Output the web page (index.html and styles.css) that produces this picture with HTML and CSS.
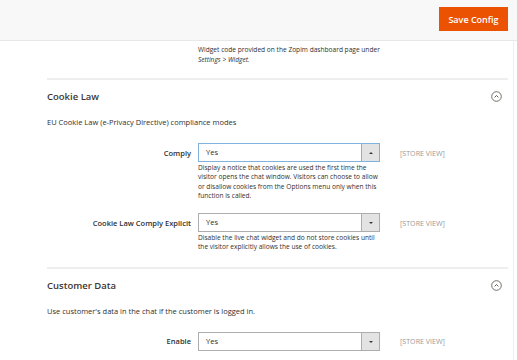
FILE: index.html
```html
<!DOCTYPE html>
<html lang="en">
<head>
    <meta charset="UTF-8">
    <title>Zopim Chat Configuration</title>
    <link rel="stylesheet" href="styles.css">
</head>
<body>
    <header class="page-actions">
        <button class="btn-save">Save Config</button>
    </header>
    <div class="content">
        <div class="widget-note">
            Widget code provided on the Zopim dashboard page under<br>
            <em>Settings &gt; Widget.</em>
        </div>

        <section class="section">
            <div class="section-head">
                <h2>Cookie Law</h2>
                <span class="toggle">
                    <svg width="11" height="11" viewBox="0 0 11 11"><circle cx="5.5" cy="5.5" r="4.8" fill="none" stroke="#676056" stroke-width="0.9"/><path d="M3.6 6.4 L5.5 4.5 L7.4 6.4" fill="none" stroke="#514943" stroke-width="0.9"/></svg>
                </span>
            </div>
            <p class="section-desc">EU Cookie Law (e-Privacy Directive) compliance modes</p>

            <div class="field">
                <label>Comply</label>
                <div class="select focused">
                    <span class="value">Yes</span>
                    <span class="arrow up"></span>
                </div>
                <span class="scope">[STORE VIEW]</span>
                <p class="note">Display a notice that cookies are used the first time the visitor opens the chat window. Visitors can choose to allow or disallow cookies from the Options menu only when this function is called.</p>
            </div>

            <div class="field">
                <label>Cookie Law Comply Explicit</label>
                <div class="select">
                    <span class="value">Yes</span>
                    <span class="arrow"></span>
                </div>
                <span class="scope">[STORE VIEW]</span>
                <p class="note">Disable the live chat widget and do not store cookies until the visitor explicitly allows the use of cookies.</p>
            </div>
        </section>

        <section class="section">
            <div class="section-head">
                <h2>Customer Data</h2>
                <span class="toggle">
                    <svg width="11" height="11" viewBox="0 0 11 11"><circle cx="5.5" cy="5.5" r="4.8" fill="none" stroke="#676056" stroke-width="0.9"/><path d="M3.6 6.4 L5.5 4.5 L7.4 6.4" fill="none" stroke="#514943" stroke-width="0.9"/></svg>
                </span>
            </div>
            <p class="section-desc">Use customer's data in the chat if the customer is logged in.</p>

            <div class="field">
                <label>Enable</label>
                <div class="select">
                    <span class="value">Yes</span>
                    <span class="arrow"></span>
                </div>
                <span class="scope">[STORE VIEW]</span>
            </div>
        </section>
    </div>
</body>
</html>
```

FILE: styles.css
```css
body {
    margin: 0;
    font-family: "Open Sans", "Liberation Sans", sans-serif;
    color: #303030;
    background: #fff;
    font-size: 7.5px;
}
.page-actions {
    height: 41px;
    background: #f8f8f8;
    border-bottom: 1px solid #e8e8e8;
    display: flex;
    justify-content: flex-end;
    align-items: flex-start;
    padding: 7px 9px 0 0;
    box-sizing: border-box;
}
.btn-save {
    background: #eb5202;
    border: 0;
    color: #fff;
    font-family: "Open Sans", sans-serif;
    font-size: 9px;
    font-weight: 600;
    width: 69px;
    height: 24px;
    padding: 0;
}
.content {
    padding: 0 5px 0 47px;
    border-right: 1px solid #f0f0f0;
    margin-right: 3px;
}
.widget-note {
    margin-left: 151px;
    padding-top: 4px;
    line-height: 10px;
    height: 33px;
    font-size: 6.6px;
}
.widget-note em {
    font-style: italic;
}
.section {
    border-top: 2px solid #eeeeee;
}
.section + .section {
    margin-top: 2px;
}
.section-head {
    display: flex;
    justify-content: space-between;
    align-items: center;
    height: 33px;
}
.section-head h2 {
    margin: 0;
    font-size: 9.5px;
    font-weight: 600;
    color: #41362f;
}
.toggle {
    display: flex;
    margin-right: 6px;
}
.section-desc {
    margin: 0;
    line-height: 10px;
    padding-top: 4px;
    height: 26px;
}
.field {
    display: grid;
    grid-template-columns: 151px 182px 1fr;
    align-items: center;
    padding-bottom: 13px;
}
.field label {
    text-align: right;
    padding-right: 7px;
    font-weight: 600;
    color: #303030;
}
.select {
    display: flex;
    height: 19px;
    border: 1px solid #adadad;
    box-sizing: border-box;
    background: #fff;
}
.select.focused {
    border-color: #7fb2dd;
}
.select .value {
    flex: 1;
    padding-left: 7px;
    line-height: 17px;
}
.select .arrow {
    width: 17px;
    background: #e3e3e3;
    border-left: 1px solid #adadad;
    position: relative;
}
.select.focused .arrow {
    border-left-color: #7fb2dd;
}
.arrow::after {
    content: "";
    position: absolute;
    left: 7px;
    top: 8px;
    border-left: 2px solid transparent;
    border-right: 2px solid transparent;
    border-top: 2px solid #41362f;
}
.arrow.up::after {
    border-top: 0;
    border-bottom: 2px solid #41362f;
}
.scope {
    padding-left: 20px;
    color: #999;
    font-size: 7.1px;
}
.note {
    grid-column: 2;
    margin: 1px 0 0;
    line-height: 9.3px;
    font-size: 6.6px;
}
```
